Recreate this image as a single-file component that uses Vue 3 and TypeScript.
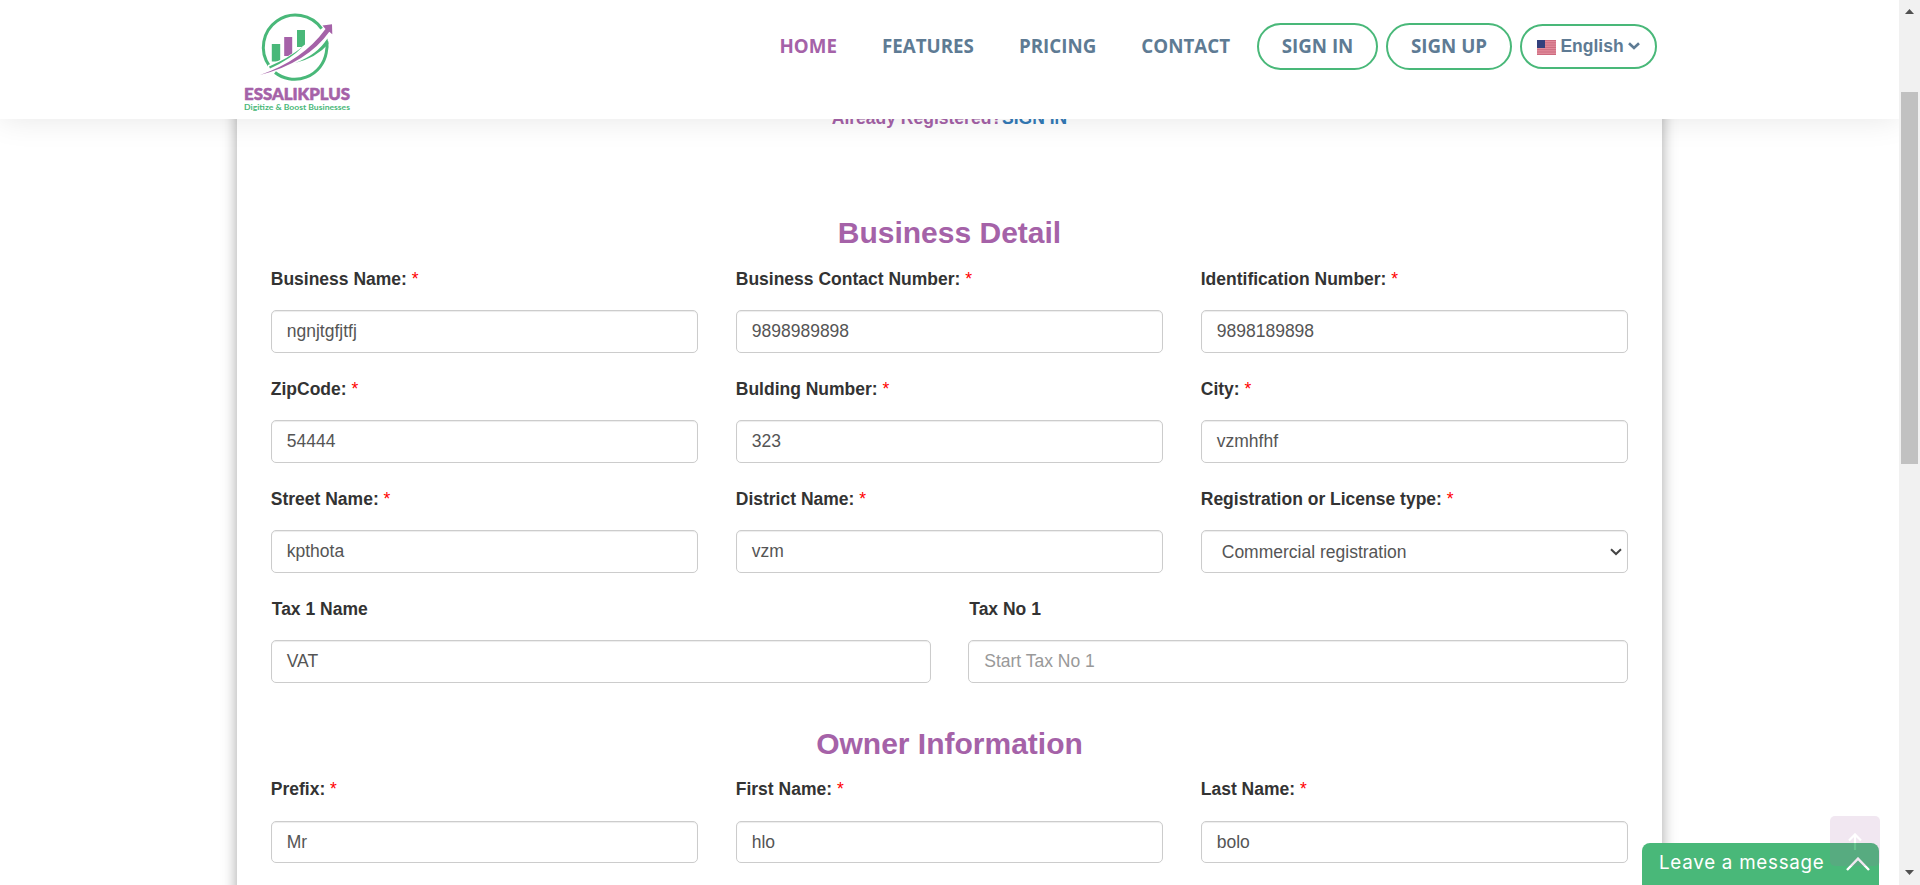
<script setup lang="ts">
interface Field {
  label: string
  value?: string
  placeholder?: string
  required?: boolean
  select?: boolean
}

const navLinks = [
  { text: 'HOME', active: true },
  { text: 'FEATURES', active: false },
  { text: 'PRICING', active: false },
  { text: 'CONTACT', active: false },
]

const businessFields: Field[] = [
  { label: 'Business Name:', value: 'ngnjtgfjtfj', required: true },
  { label: 'Business Contact Number:', value: '9898989898', required: true },
  { label: 'Identification Number:', value: '9898189898', required: true },
  { label: 'ZipCode:', value: '54444', required: true },
  { label: 'Bulding Number:', value: '323', required: true },
  { label: 'City:', value: 'vzmhfhf', required: true },
  { label: 'Street Name:', value: 'kpthota', required: true },
  { label: 'District Name:', value: 'vzm', required: true },
  { label: 'Registration or License type:', value: 'Commercial registration', required: true, select: true },
]

const taxFields: Field[] = [
  { label: 'Tax 1 Name', value: 'VAT' },
  { label: 'Tax No 1', placeholder: 'Start Tax No 1' },
]

const ownerFields: Field[] = [
  { label: 'Prefix:', value: 'Mr', required: true },
  { label: 'First Name:', value: 'hlo', required: true },
  { label: 'Last Name:', value: 'bolo', required: true },
]
</script>

<template>
  <div class="screen">
    <main class="page">
      <section class="panel">
        <p class="registered">Already Registered?<a class="signin-link">SIGN IN</a></p>

        <h2 class="heading">Business Detail</h2>
        <div class="grid three">
          <div v-for="f in businessFields" :key="f.label" class="field">
            <label class="label">{{ f.label }} <span v-if="f.required" class="star">*</span></label>
            <div class="control" :class="{ select: f.select }">
              <span>{{ f.value }}</span>
              <svg v-if="f.select" class="caret" width="12" height="8" viewBox="0 0 12 8">
                <path d="M1 1.2 L6 6 L11 1.2" fill="none" stroke="#444" stroke-width="2" />
              </svg>
            </div>
          </div>
        </div>
        <div class="grid two">
          <div v-for="f in taxFields" :key="f.label" class="field">
            <label class="label">{{ f.label }}</label>
            <div class="control">
              <span v-if="f.value">{{ f.value }}</span>
              <span v-else class="placeholder">{{ f.placeholder }}</span>
            </div>
          </div>
        </div>

        <h2 class="heading owner">Owner Information</h2>
        <div class="grid three owner-grid">
          <div v-for="f in ownerFields" :key="f.label" class="field">
            <label class="label">{{ f.label }} <span class="star">*</span></label>
            <div class="control"><span>{{ f.value }}</span></div>
          </div>
        </div>
      </section>
    </main>

    <header class="header">
      <svg class="logo" width="112" height="104" viewBox="240 10 112 104">
        <path d="M321.6 28.6 A32 32 0 0 0 269.2 65.6 M275 72.5 A32 32 0 0 0 326.2 53 Q327.6 47.5 326.9 41.5" fill="none" stroke="#49b879" stroke-width="3" />
        <rect x="271.8" y="44" width="8.4" height="17.5" fill="#49b879" />
        <rect x="284.2" y="37" width="8" height="19" fill="#a562a8" />
        <rect x="297" y="30" width="8" height="17" fill="#49b879" />
        <path d="M268 65 Q290 57 305 44.5 Q313 38 318 31 L321 36 Q300 60 268 68 Z" fill="#fff" />
        <path d="M269 66.5 Q288 58.5 303 46.5 Q291 59 270 68.5 Z" fill="#49b879" />
        <path d="M295 63 Q317 55 327.4 38.5 L328.4 44 Q316 58 295 63 Z" fill="#49b879" />
        <path d="M260 75 Q303 60 325.5 29 L322.5 25.5 L332 24.3 L332.3 34.3 L329.3 31.8 Q307 63 260 75 Z" fill="#a562a8" />
        <text class="logo-name" x="244" y="100.4" textLength="106" lengthAdjust="spacingAndGlyphs">ESSALIKPLUS</text>
        <text class="logo-tag" x="244" y="110.4" textLength="106" lengthAdjust="spacingAndGlyphs">Digitize &amp; Boost Businesses</text>
      </svg>

      <nav class="nav">
        <a v-for="l in navLinks" :key="l.text" class="nav-link" :class="{ active: l.active }">{{ l.text }}</a>
        <a class="pill sign-in">SIGN IN</a>
        <a class="pill sign-up">SIGN UP</a>
        <a class="pill language">
          <svg class="flag" width="19" height="15" viewBox="0 0 19 15">
            <rect width="19" height="15" fill="#e08a9a" />
            <path d="M0 .5H19M0 2.8H19M0 5.1H19M0 7.4H19M0 9.7H19M0 12H19M0 14.5H19" stroke="#cc6a7e" stroke-width="1" />
            <rect width="8" height="8" fill="#333f7c" />
          </svg>
          <span class="language-name">English</span>
          <svg class="lang-caret" width="12" height="8" viewBox="0 0 12 8">
            <path d="M1 1.2 L6 6 L11 1.2" fill="none" stroke="#5e7b94" stroke-width="2.6" />
          </svg>
        </a>
      </nav>
    </header>

    <aside class="scrollbar">
      <svg width="9" height="5" viewBox="0 0 9 5"><path d="M4.5 0 L9 5 H0 Z" fill="#505050" /></svg>
      <div class="thumb"></div>
      <svg class="down" width="9" height="5" viewBox="0 0 9 5"><path d="M0 0 H9 L4.5 5 Z" fill="#505050" /></svg>
    </aside>

    <div class="chat">
      <span class="chat-text">Leave a message</span>
      <svg width="24" height="14" viewBox="0 0 24 14">
        <path d="M1 13 L12 1.6 L23 13" fill="none" stroke="#fff" stroke-width="2.4" />
      </svg>
    </div>
    <div class="to-top">
      <svg width="14" height="17" viewBox="0 0 14 17">
        <path d="M7 17 V2 M1 7.5 L7 1.4 L13 7.5" fill="none" stroke="#fff" stroke-width="2.2" />
      </svg>
    </div>
  </div>
</template>

<style>
body {
  margin: 0;
  background: #fff;
}
</style>

<style scoped>
.screen {
  position: relative;
  width: 1920px;
  height: 885px;
  overflow: hidden;
  background: #fff;
  font-family: "Liberation Sans", Arial, sans-serif;
  font-size: 17.5px;
  line-height: 25px;
  color: #333;
}

.page {
  width: 1899px;
  display: flex;
  justify-content: center;
}

.panel {
  box-sizing: border-box;
  width: 1425px;
  height: 940px;
  padding: 106px 15px 0;
  background: #fff;
  box-shadow: 0 0 14px rgba(0, 0, 0, 0.36);
}

.registered {
  margin: 0;
  text-align: center;
  font-weight: 700;
  color: #a562a8;
}

.signin-link {
  color: #337ab7;
}

.heading {
  margin: 85px 0 18px;
  font-size: 30px;
  line-height: 33px;
  font-weight: 700;
  text-align: center;
  color: #a562a8;
}

.heading.owner {
  margin: 20px 0 17px;
}

.grid {
  display: grid;
}

.three {
  grid-template-columns: repeat(3, 1fr);
}

.two {
  grid-template-columns: repeat(2, 1fr);
}

.field {
  height: 110px;
  padding: 0 18.75px;
}

.label {
  display: block;
  margin-bottom: 18px;
  font-weight: 700;
}

.two .label {
  padding-left: 1px;
}

.star {
  font-weight: 400;
  color: #f00;
}

.control {
  box-sizing: border-box;
  display: flex;
  align-items: center;
  height: 43px;
  padding: 0 15px;
  border: 1px solid #ccc;
  border-radius: 5px;
  box-shadow: inset 0 1px 1px rgba(0, 0, 0, 0.075);
  color: #555;
}

.select {
  justify-content: space-between;
  padding: 2px 5px 0 20px;
}

.caret {
  margin-bottom: 1px;
}

.owner-grid .label {
  margin-bottom: 19px;
}

.owner-grid .control {
  height: 42px;
  padding-top: 1px;
}

.placeholder {
  color: #999;
}

.header {
  position: absolute;
  inset: 0 21px auto 0;
  box-sizing: border-box;
  height: 119px;
  padding: 0 242px 0 240px;
  display: flex;
  justify-content: space-between;
  background: #fff;
  box-shadow: 0 0 30px rgba(0, 0, 0, 0.1);
}

.logo {
  margin-top: 10px;
}

.logo-name {
  font: 900 17px Lato, sans-serif;
  fill: #a562a8;
  stroke: #a562a8;
  stroke-width: 0.6;
  stroke-linejoin: round;
}

.logo-tag {
  font: 700 7.6px Lato, sans-serif;
  fill: #49b879;
}

.nav {
  display: flex;
  align-items: center;
  height: 93px;
  font-family: "Open Sans", sans-serif;
  font-size: 18.75px;
  font-weight: 700;
  color: #5e7b94;
}

.nav-link {
  margin-right: 45px;
  padding-bottom: 2px;
}

.nav-link:nth-child(4) {
  margin-right: 27px;
}

.active {
  color: #a562a8;
}

.pill {
  box-sizing: border-box;
  display: flex;
  align-items: center;
  justify-content: center;
  height: 47px;
  padding-bottom: 2px;
  border: 2px solid #49b879;
  border-radius: 25px;
}

.sign-in {
  width: 121px;
  margin-right: 8px;
}

.sign-up {
  width: 126px;
  margin-right: 8px;
}

.language {
  width: 137px;
  height: 45px;
  padding-bottom: 0;
  font-family: "Liberation Sans", Arial, sans-serif;
  font-size: 17.5px;
}

.flag {
  margin: 2px 4px 0 0;
}

.lang-caret {
  margin: 0 0 2px 4px;
}

.scrollbar {
  position: absolute;
  inset: 0 0 0 auto;
  box-sizing: border-box;
  width: 21px;
  padding: 9px 0 8px;
  display: flex;
  flex-direction: column;
  align-items: center;
  background: #f1f1f1;
}

.thumb {
  width: 17px;
  height: 372px;
  margin-top: 78px;
  background: #c1c1c1;
}

.down {
  margin-top: auto;
  margin-bottom: 2px;
}

.chat {
  position: absolute;
  right: 41px;
  bottom: 0;
  box-sizing: border-box;
  width: 237px;
  height: 42px;
  padding: 0 9px 0 17px;
  display: flex;
  align-items: center;
  justify-content: space-between;
  border-radius: 8px 8px 0 0;
  background: #49b879;
  color: #fff;
}

.chat-text {
  font-family: Inter, "Open Sans", sans-serif;
  font-size: 18.75px;
  letter-spacing: 0.75px;
  padding-bottom: 3px;
}

.to-top {
  position: absolute;
  right: 40px;
  bottom: 19px;
  width: 50px;
  height: 50px;
  display: flex;
  align-items: center;
  justify-content: center;
  border-radius: 5px;
  background: #a864a8;
  opacity: 0.15;
}
</style>
